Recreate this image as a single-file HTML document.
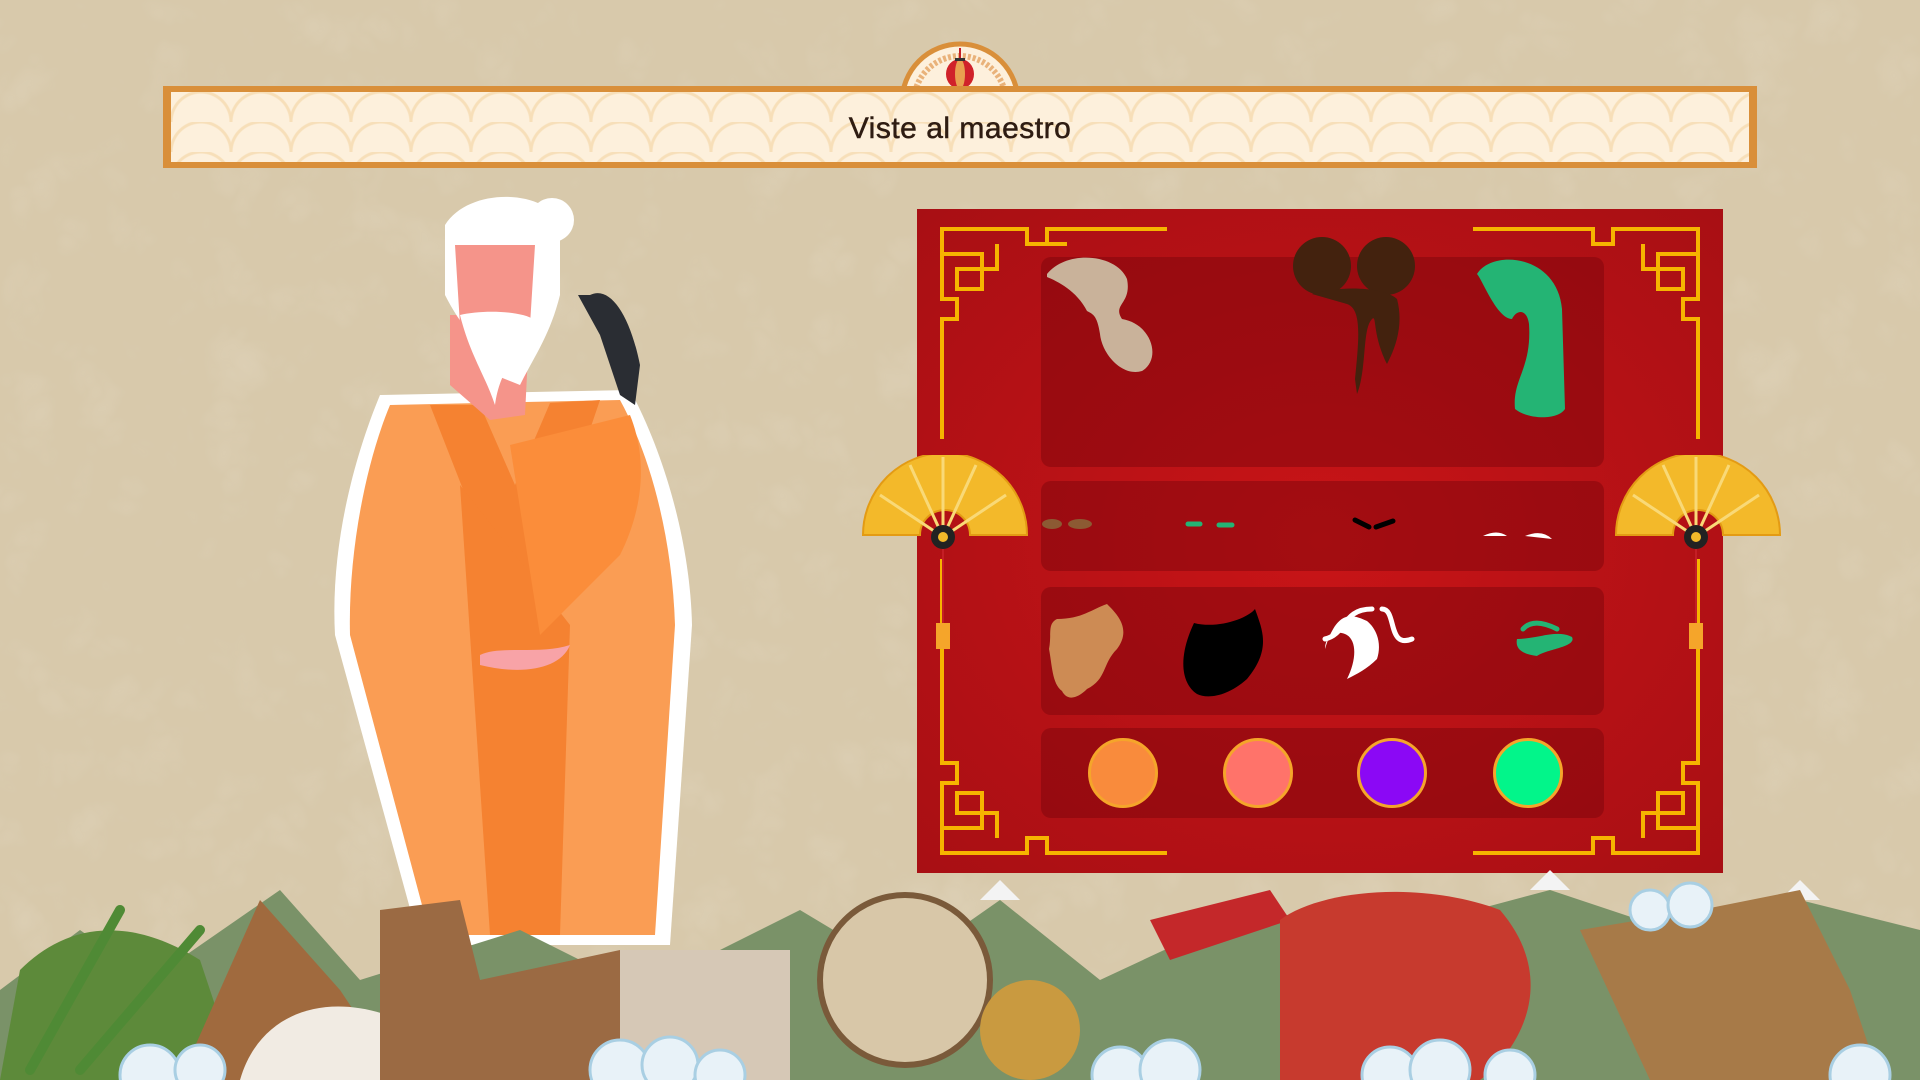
<!DOCTYPE html>
<html><head><meta charset="utf-8"><style>
*{margin:0;padding:0;box-sizing:border-box}
body{width:1920px;height:1080px;overflow:hidden;position:relative;background:#d8c9ab;font-family:"Liberation Sans",sans-serif}
.abs{position:absolute}
.banner{left:163px;top:86px;width:1594px;height:82px;background:#fdf0dc;border:6px solid #d98f3a;border-left-width:8px;border-right-width:8px;
background-image:radial-gradient(circle at 50% 100%,transparent 28px,#f7dfb9 29px,#f7dfb9 31px,transparent 32px);background-size:60px 30px}
.title{left:0;width:1920px;top:112px;text-align:center;font-size:30px;color:#2e1c12;letter-spacing:.5px;-webkit-text-stroke:.5px #2e1c12}
.panel{left:917px;top:209px;width:806px;height:664px;background:radial-gradient(ellipse at center,#c81417,#a80f14)}
.row{position:absolute;left:124px;width:563px;background:rgba(120,5,10,.45);border-radius:10px}
.circ{position:absolute;width:70px;height:70px;border-radius:50%;border:3px solid #f5a52a}
</style></head><body>
<svg class="abs" style="left:0;top:0" width="1920" height="1080">
<defs><filter id="n"><feTurbulence baseFrequency="0.015" numOctaves="3" seed="3"/><feColorMatrix values="0 0 0 0 1 0 0 0 0 1 0 0 0 0 1 0 0 0 .35 -.1"/></filter></defs>
<rect width="1920" height="1080" fill="#d8c9ab"/>
<rect width="1920" height="1080" filter="url(#n)" opacity=".5"/>
</svg>
<svg class="abs" style="left:898px;top:34px" width="124" height="70"><path d="M4 68 A58 58 0 0 1 120 68" fill="#fdf0dc" stroke="#d98f3a" stroke-width="5"/><path d="M16 68 A46 46 0 0 1 108 68" fill="none" stroke="#e9b27a" stroke-width="6" stroke-dasharray="3 2"/><line x1="62" y1="14" x2="62" y2="26" stroke="#c41e25" stroke-width="2"/><ellipse cx="62" cy="40" rx="14" ry="15" fill="#d0222a"/><ellipse cx="62" cy="40" rx="5" ry="15" fill="#e9a050"/><rect x="57" y="24" width="10" height="3" fill="#333"/><rect x="57" y="54" width="10" height="3" fill="#333"/><line x1="62" y1="57" x2="62" y2="68" stroke="#c41e25" stroke-width="3"/></svg>
<div class="abs banner"></div>
<div class="abs title">Viste al maestro</div>
<div class="abs panel">
<svg class="abs" style="left:0;top:0" width="806" height="664" fill="none" stroke="#f6b400" stroke-width="4">
<path d="M250 20 H130 V35 H110 V20 H25 V90 H40 V110 H25 V230 M25 45 H65 V80 H40 V60 H80 V35 M130 20 V35 H150"/>
<path d="M556 20 H676 V35 H696 V20 H781 V90 H766 V110 H781 V230 M781 45 H741 V80 H766 V60 H726 V35"/>
<path d="M250 644 H130 V629 H110 V644 H25 V574 H40 V554 H25 V350 M25 619 H65 V584 H40 V604 H80 V629"/>
<path d="M556 644 H676 V629 H696 V644 H781 V574 H766 V554 H781 V350 M781 619 H741 V584 H766 V604 H726 V629"/>
</svg>
<div class="row" style="top:48px;height:210px"></div>
<div class="row" style="top:272px;height:90px"></div>
<div class="row" style="top:378px;height:128px"></div>
<div class="row" style="top:519px;height:90px"></div>
<svg class="abs" style="left:0;top:0" width="806" height="664">
<path d="M130 65 C150 40 200 45 210 70 C215 95 195 95 205 110 C235 115 245 150 225 162 C205 168 185 145 183 125 C180 105 175 105 170 102 C160 82 140 72 130 68Z" fill="#c9b29a"/>
<g fill="#43220e"><circle cx="405" cy="57" r="29"/><circle cx="469" cy="57" r="29"/><path d="M395 85 C430 75 470 80 480 90 C488 120 475 145 470 155 C455 125 460 105 455 110 C445 120 450 160 440 185 L438 170 C442 130 445 100 430 95 Z"/></g>
<path d="M560 65 C575 40 640 45 645 100 L648 200 C640 212 610 210 598 200 C595 170 615 160 612 115 C610 100 600 100 595 110 C580 110 565 70 560 65Z" fill="#24b474"/>
<g fill="#8c5a33"><ellipse cx="135" cy="315" rx="10" ry="5"/><ellipse cx="163" cy="315" rx="12" ry="5"/></g>
<g stroke="#24b474" stroke-width="5" stroke-linecap="round"><line x1="271" y1="315" x2="283" y2="315"/><line x1="302" y1="316" x2="315" y2="316"/></g>
<g stroke="#000" stroke-width="5" stroke-linecap="round"><line x1="438" y1="311" x2="452" y2="318"/><line x1="459" y1="318" x2="476" y2="312"/></g>
<g fill="#fff"><path d="M566 327 Q580 320 590 327Z"/><path d="M608 327 Q625 320 635 330Z"/></g>
<path d="M140 410 C165 410 175 400 190 395 C200 405 215 420 200 440 C185 455 190 470 170 480 C160 490 150 492 145 482 C135 475 135 455 132 440 C135 425 130 415 140 410Z" fill="#cd8b54"/>
<path d="M277 414 C300 420 330 410 338 400 C345 420 355 440 330 470 C310 488 290 490 280 485 C265 475 260 450 277 414Z" fill="#000"/>
<path d="M408 440 C420 400 435 405 450 412 C460 420 465 435 460 450 C450 460 440 465 430 470 C440 450 440 430 428 425 C415 420 408 430 408 440Z" fill="#fff"/>
<g fill="none" stroke="#fff" stroke-width="5" stroke-linecap="round"><path d="M408 430 C430 425 425 400 455 400"/><path d="M465 400 C480 400 470 440 495 430"/></g>
<path d="M600 430 C620 430 640 420 655 428 C660 438 630 440 620 447 C605 445 598 440 600 430Z" fill="#24b474"/>
<path d="M606 420 C615 410 630 415 640 420" stroke="#24b474" stroke-width="5" fill="none" stroke-linecap="round"/>
</svg>
<div class="circ" style="left:171px;top:529px;background:#f98b3c"></div>
<div class="circ" style="left:306px;top:529px;background:#ff736a"></div>
<div class="circ" style="left:440px;top:529px;background:#8b08f5"></div>
<div class="circ" style="left:576px;top:529px;background:#02f58a"></div>
</div>
<svg class="abs" style="left:860px;top:455px" width="170" height="200"><path d="M3 80 A82 82 0 0 1 167 80 L110 80 A25 25 0 0 0 60 80 Z" fill="#f3b92a" stroke="#e39b14" stroke-width="2"/><g stroke="#f9d977" stroke-width="3"><line x1="83" y1="82" x2="20" y2="40"/><line x1="83" y1="82" x2="50" y2="10"/><line x1="83" y1="82" x2="83" y2="2"/><line x1="83" y1="82" x2="116" y2="10"/><line x1="83" y1="82" x2="146" y2="40"/></g><circle cx="83" cy="82" r="12" fill="#222"/><circle cx="83" cy="82" r="5" fill="#f3b92a"/><line x1="83" y1="94" x2="83" y2="170" stroke="#c41e25" stroke-width="2"/><rect x="76" y="168" width="14" height="26" fill="#f5a52a"/></svg>
<svg class="abs" style="left:1613px;top:455px" width="170" height="200"><path d="M3 80 A82 82 0 0 1 167 80 L110 80 A25 25 0 0 0 60 80 Z" fill="#f3b92a" stroke="#e39b14" stroke-width="2"/><g stroke="#f9d977" stroke-width="3"><line x1="83" y1="82" x2="20" y2="40"/><line x1="83" y1="82" x2="50" y2="10"/><line x1="83" y1="82" x2="83" y2="2"/><line x1="83" y1="82" x2="116" y2="10"/><line x1="83" y1="82" x2="146" y2="40"/></g><circle cx="83" cy="82" r="12" fill="#222"/><circle cx="83" cy="82" r="5" fill="#f3b92a"/><line x1="83" y1="94" x2="83" y2="170" stroke="#c41e25" stroke-width="2"/><rect x="76" y="168" width="14" height="26" fill="#f5a52a"/></svg>
<svg class="abs" style="left:320px;top:185px" width="380" height="800">
<path d="M60 210 L310 205 C340 260 370 350 372 440 L350 760 L100 760 L15 450 C10 360 35 270 60 210Z" fill="#fff"/>
<path d="M70 220 L300 215 C330 270 352 350 355 440 L335 750 L110 750 L30 450 C28 370 45 280 70 220Z" fill="#fa9d54"/>
<path d="M110 220 L200 450 L280 215 L230 218 L195 300 L160 220Z" fill="#f58231"/>
<path d="M140 300 L250 440 L240 750 L170 750Z" fill="#f58231"/>
<path d="M190 260 L310 230 C330 280 320 330 300 370 L220 450Z" fill="#fb8d3a"/>
<path d="M160 470 C180 460 220 470 250 460 C240 485 200 490 160 480Z" fill="#f8a3a7"/>
<path d="M130 130 L210 130 L205 230 L170 235 L130 200Z" fill="#f5948a"/>
<path d="M125 40 C150 0 230 5 240 40 L240 110 C230 150 215 170 200 200 L175 190 C160 160 140 140 125 110Z" fill="#fff"/>
<circle cx="232" cy="35" r="22" fill="#fff"/>
<path d="M135 60 L215 60 L210 140 L140 140Z" fill="#f5948a"/>
<path d="M140 130 C160 125 200 125 215 135 C205 160 180 180 175 220 C165 190 150 170 140 130Z" fill="#fff"/>
<path d="M270 110 C290 100 310 130 320 180 L315 220 L300 210 L280 150 L258 110Z" fill="#2a2d33"/>
</svg>
<svg class="abs" style="left:0;top:870px" width="1920" height="210">
<path d="M0 210 L0 120 L80 60 L150 110 L280 20 L360 110 L520 60 L640 120 L800 40 L900 100 L1000 30 L1100 110 L1250 40 L1400 60 L1550 20 L1700 70 L1800 30 L1920 60 L1920 210Z" fill="#7a9268"/>
<g fill="#f3f3f3"><path d="M980 30 L1000 10 L1020 30Z"/><path d="M1530 20 L1550 0 L1570 20Z"/><path d="M1780 30 L1800 10 L1820 30Z"/></g>
<path d="M0 210 L20 100 C60 60 120 40 200 90 L240 210Z" fill="#5d8a3a"/>
<g stroke="#4f8a35" stroke-width="10" stroke-linecap="round"><line x1="30" y1="200" x2="120" y2="40"/><line x1="80" y1="200" x2="200" y2="60"/></g>
<path d="M180 210 L260 30 L340 120 L400 210Z" fill="#a06a3e"/>
<path d="M240 210 C260 140 330 120 400 150 L430 210Z" fill="#f1ebe3"/>
<path d="M380 40 L460 30 L480 110 L620 80 L630 210 L380 210Z" fill="#9b6a43"/>
<rect x="620" y="80" width="170" height="130" fill="#d6c8b6"/>
<circle cx="905" cy="110" r="85" fill="#d8c7a8" stroke="#7a5a3a" stroke-width="6"/>
<circle cx="1030" cy="160" r="50" fill="#c99a40"/>
<path d="M1150 50 L1270 20 L1290 50 L1170 90Z" fill="#c4282a"/>
<path d="M1280 50 C1320 20 1420 10 1500 40 C1560 110 1520 180 1480 210 L1280 210Z" fill="#c73a2e"/>
<path d="M1580 60 L1700 40 L1800 20 L1850 120 L1880 210 L1650 210Z" fill="#a77a48"/>
<g fill="#e8f2f8" stroke="#a9cfe3" stroke-width="3">
<circle cx="150" cy="205" r="30"/><circle cx="200" cy="200" r="25"/><circle cx="620" cy="200" r="30"/><circle cx="670" cy="195" r="28"/><circle cx="720" cy="205" r="25"/><circle cx="1120" cy="205" r="28"/><circle cx="1170" cy="200" r="30"/><circle cx="1390" cy="205" r="28"/><circle cx="1440" cy="200" r="30"/><circle cx="1510" cy="205" r="25"/><circle cx="1860" cy="205" r="30"/><circle cx="1650" cy="40" r="20"/><circle cx="1690" cy="35" r="22"/></g>
</svg>
</body></html>
